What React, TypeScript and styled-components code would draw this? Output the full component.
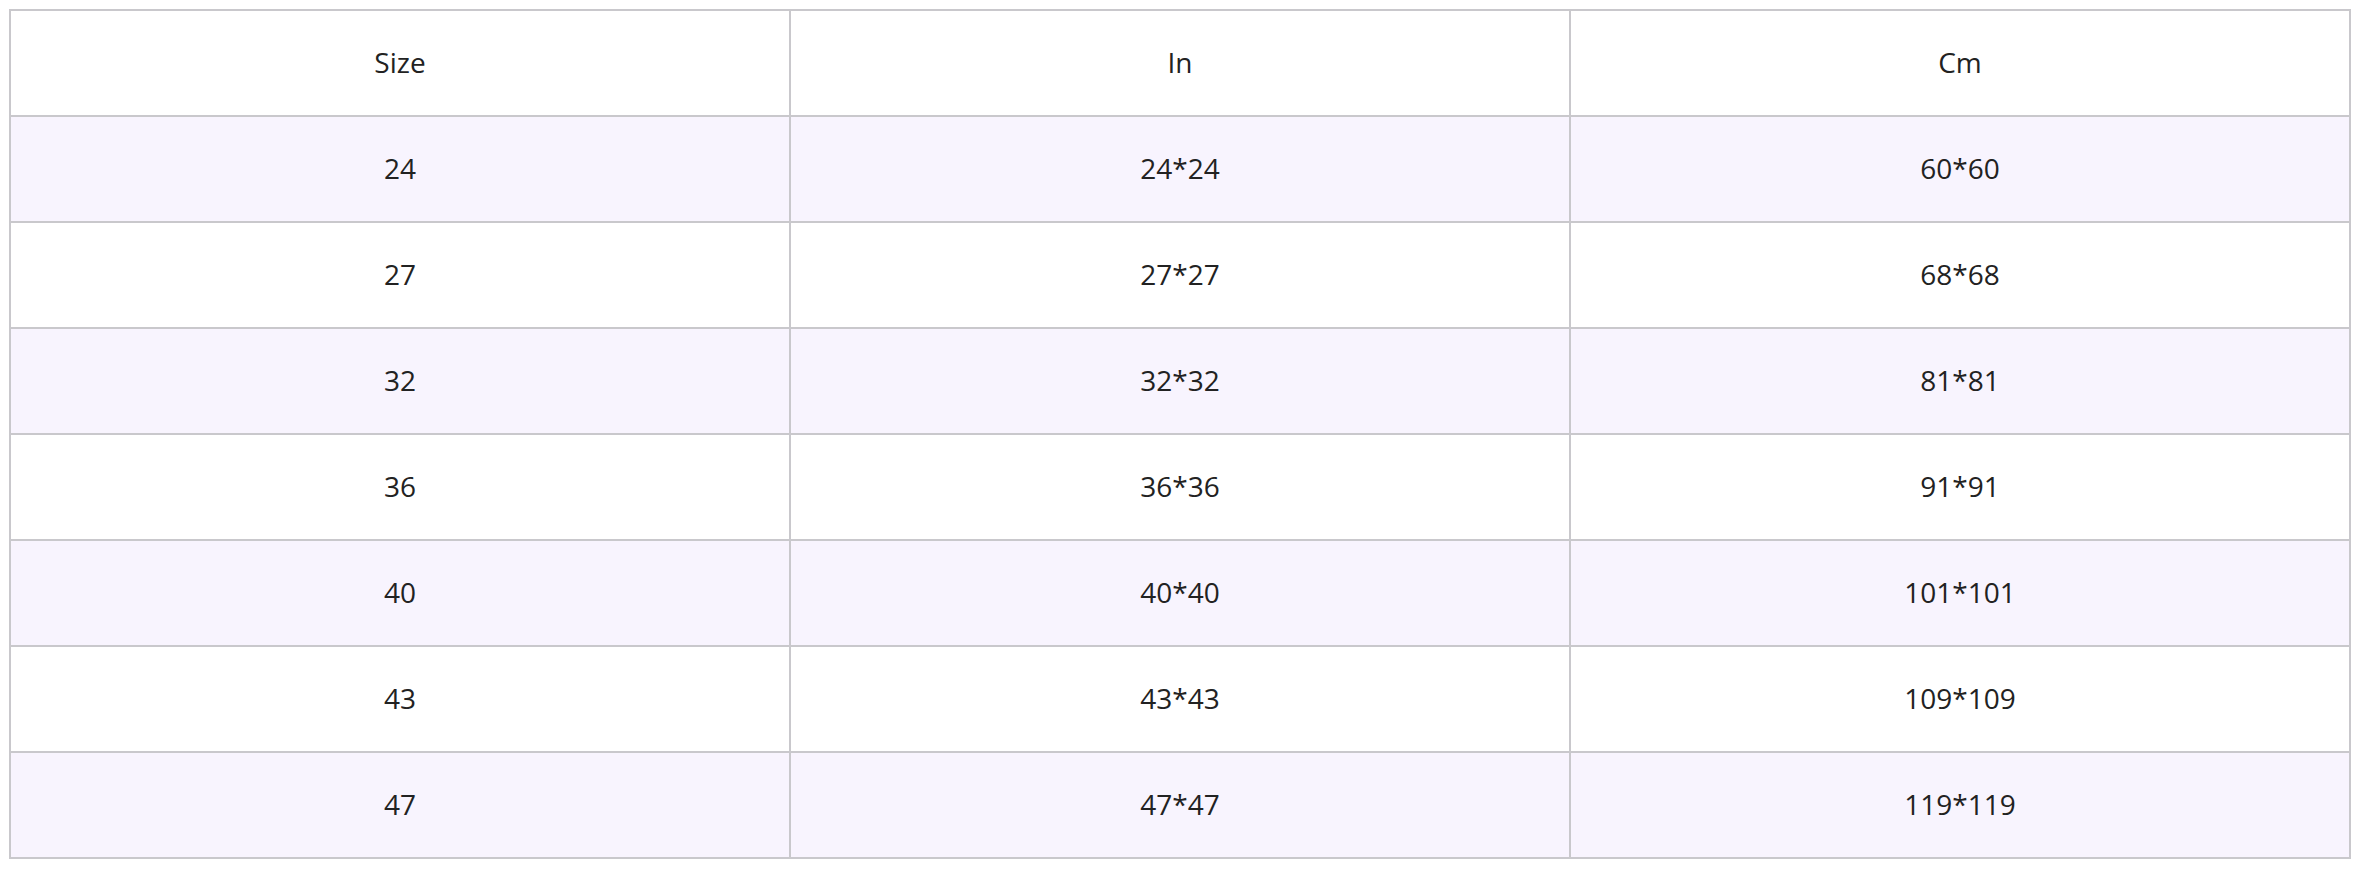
import React from "react";
import styled, { createGlobalStyle } from "styled-components";

const GlobalStyle = createGlobalStyle`
  body {
    margin: 9px;
    background: #ffffff;
    font-family: "Open Sans", "Liberation Sans", sans-serif;
  }
`;

const SizeTable = styled.table`
  width: 100%;
  border-collapse: separate;
  border-spacing: 0;
  border-top: 2px solid #c9c8cc;
  border-left: 2px solid #c9c8cc;
  table-layout: fixed;
`;

const Row = styled.tr<{ $striped?: boolean }>`
  background: ${(p) => (p.$striped ? "#f8f4fe" : "#ffffff")};
`;

const Cell = styled.td`
  padding: 0 0 1px;
  height: 103px;
  line-height: 103px;
  text-align: center;
  font-size: 28px;
  color: #222222;
  border-right: 2px solid #c9c8cc;
  border-bottom: 2px solid #c9c8cc;
`;

const HeadCell = styled(Cell).attrs({ as: "th" })`
  font-weight: 400;
`;

interface SizeRow {
  size: number;
  inches: string;
  cm: string;
}

const rows: SizeRow[] = [
  { size: 24, inches: "24*24", cm: "60*60" },
  { size: 27, inches: "27*27", cm: "68*68" },
  { size: 32, inches: "32*32", cm: "81*81" },
  { size: 36, inches: "36*36", cm: "91*91" },
  { size: 40, inches: "40*40", cm: "101*101" },
  { size: 43, inches: "43*43", cm: "109*109" },
  { size: 47, inches: "47*47", cm: "119*119" },
];

const App = () => {
  return (
    <>
      <GlobalStyle />
      <SizeTable>
        <thead>
          <Row>
            <HeadCell>Size</HeadCell>
            <HeadCell>In</HeadCell>
            <HeadCell>Cm</HeadCell>
          </Row>
        </thead>
        <tbody>
          {rows.map((r, i) => (
            <Row key={r.size} $striped={i % 2 === 0}>
              <Cell>{r.size}</Cell>
              <Cell>{r.inches}</Cell>
              <Cell>{r.cm}</Cell>
            </Row>
          ))}
        </tbody>
      </SizeTable>
    </>
  );
};

export default App;
